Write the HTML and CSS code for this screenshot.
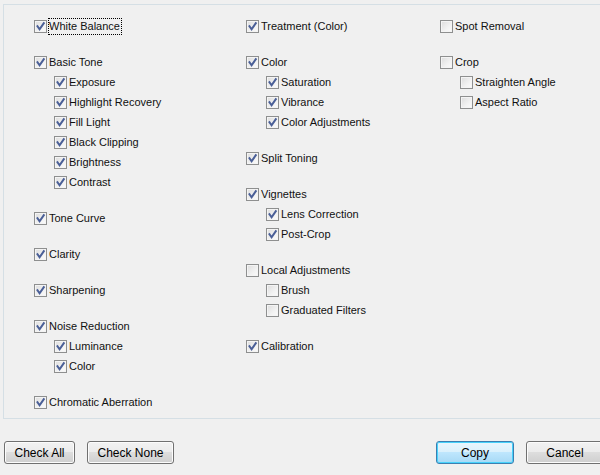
FILE: index.html
```html
<!DOCTYPE html>
<html>
<head>
<meta charset="utf-8">
<link rel="stylesheet" href="styles.css">
</head>
<body>
<div class="panel">
  <div class="col col1">
    <div class="group">
      <div class="row"><span class="cb on"><svg viewBox="0 0 11 11"><path d="M2.5 5.2 L4.6 8.3 L8.8 2.2" /></svg></span><span class="lbl focus">White Balance</span></div>
    </div>
    <div class="group">
      <div class="row"><span class="cb on"><svg viewBox="0 0 11 11"><path d="M2.5 5.2 L4.6 8.3 L8.8 2.2" /></svg></span><span class="lbl">Basic Tone</span></div>
      <div class="row sub"><span class="cb on"><svg viewBox="0 0 11 11"><path d="M2.5 5.2 L4.6 8.3 L8.8 2.2" /></svg></span><span class="lbl">Exposure</span></div>
      <div class="row sub"><span class="cb on"><svg viewBox="0 0 11 11"><path d="M2.5 5.2 L4.6 8.3 L8.8 2.2" /></svg></span><span class="lbl">Highlight Recovery</span></div>
      <div class="row sub"><span class="cb on"><svg viewBox="0 0 11 11"><path d="M2.5 5.2 L4.6 8.3 L8.8 2.2" /></svg></span><span class="lbl">Fill Light</span></div>
      <div class="row sub"><span class="cb on"><svg viewBox="0 0 11 11"><path d="M2.5 5.2 L4.6 8.3 L8.8 2.2" /></svg></span><span class="lbl">Black Clipping</span></div>
      <div class="row sub"><span class="cb on"><svg viewBox="0 0 11 11"><path d="M2.5 5.2 L4.6 8.3 L8.8 2.2" /></svg></span><span class="lbl">Brightness</span></div>
      <div class="row sub"><span class="cb on"><svg viewBox="0 0 11 11"><path d="M2.5 5.2 L4.6 8.3 L8.8 2.2" /></svg></span><span class="lbl">Contrast</span></div>
    </div>
    <div class="group">
      <div class="row"><span class="cb on"><svg viewBox="0 0 11 11"><path d="M2.5 5.2 L4.6 8.3 L8.8 2.2" /></svg></span><span class="lbl">Tone Curve</span></div>
    </div>
    <div class="group">
      <div class="row"><span class="cb on"><svg viewBox="0 0 11 11"><path d="M2.5 5.2 L4.6 8.3 L8.8 2.2" /></svg></span><span class="lbl">Clarity</span></div>
    </div>
    <div class="group">
      <div class="row"><span class="cb on"><svg viewBox="0 0 11 11"><path d="M2.5 5.2 L4.6 8.3 L8.8 2.2" /></svg></span><span class="lbl">Sharpening</span></div>
    </div>
    <div class="group">
      <div class="row"><span class="cb on"><svg viewBox="0 0 11 11"><path d="M2.5 5.2 L4.6 8.3 L8.8 2.2" /></svg></span><span class="lbl">Noise Reduction</span></div>
      <div class="row sub"><span class="cb on"><svg viewBox="0 0 11 11"><path d="M2.5 5.2 L4.6 8.3 L8.8 2.2" /></svg></span><span class="lbl">Luminance</span></div>
      <div class="row sub"><span class="cb on"><svg viewBox="0 0 11 11"><path d="M2.5 5.2 L4.6 8.3 L8.8 2.2" /></svg></span><span class="lbl">Color</span></div>
    </div>
    <div class="group">
      <div class="row"><span class="cb on"><svg viewBox="0 0 11 11"><path d="M2.5 5.2 L4.6 8.3 L8.8 2.2" /></svg></span><span class="lbl">Chromatic Aberration</span></div>
    </div>
  </div>

  <div class="col col2">
    <div class="group">
      <div class="row"><span class="cb on"><svg viewBox="0 0 11 11"><path d="M2.5 5.2 L4.6 8.3 L8.8 2.2" /></svg></span><span class="lbl">Treatment (Color)</span></div>
    </div>
    <div class="group">
      <div class="row"><span class="cb on"><svg viewBox="0 0 11 11"><path d="M2.5 5.2 L4.6 8.3 L8.8 2.2" /></svg></span><span class="lbl">Color</span></div>
      <div class="row sub"><span class="cb on"><svg viewBox="0 0 11 11"><path d="M2.5 5.2 L4.6 8.3 L8.8 2.2" /></svg></span><span class="lbl">Saturation</span></div>
      <div class="row sub"><span class="cb on"><svg viewBox="0 0 11 11"><path d="M2.5 5.2 L4.6 8.3 L8.8 2.2" /></svg></span><span class="lbl">Vibrance</span></div>
      <div class="row sub"><span class="cb on"><svg viewBox="0 0 11 11"><path d="M2.5 5.2 L4.6 8.3 L8.8 2.2" /></svg></span><span class="lbl">Color Adjustments</span></div>
    </div>
    <div class="group">
      <div class="row"><span class="cb on"><svg viewBox="0 0 11 11"><path d="M2.5 5.2 L4.6 8.3 L8.8 2.2" /></svg></span><span class="lbl">Split Toning</span></div>
    </div>
    <div class="group">
      <div class="row"><span class="cb on"><svg viewBox="0 0 11 11"><path d="M2.5 5.2 L4.6 8.3 L8.8 2.2" /></svg></span><span class="lbl">Vignettes</span></div>
      <div class="row sub"><span class="cb on"><svg viewBox="0 0 11 11"><path d="M2.5 5.2 L4.6 8.3 L8.8 2.2" /></svg></span><span class="lbl">Lens Correction</span></div>
      <div class="row sub"><span class="cb on"><svg viewBox="0 0 11 11"><path d="M2.5 5.2 L4.6 8.3 L8.8 2.2" /></svg></span><span class="lbl">Post-Crop</span></div>
    </div>
    <div class="group">
      <div class="row"><span class="cb"></span><span class="lbl">Local Adjustments</span></div>
      <div class="row sub"><span class="cb"></span><span class="lbl">Brush</span></div>
      <div class="row sub"><span class="cb"></span><span class="lbl">Graduated Filters</span></div>
    </div>
    <div class="group">
      <div class="row"><span class="cb on"><svg viewBox="0 0 11 11"><path d="M2.5 5.2 L4.6 8.3 L8.8 2.2" /></svg></span><span class="lbl">Calibration</span></div>
    </div>
  </div>

  <div class="col col3">
    <div class="group">
      <div class="row"><span class="cb"></span><span class="lbl">Spot Removal</span></div>
    </div>
    <div class="group">
      <div class="row"><span class="cb"></span><span class="lbl">Crop</span></div>
      <div class="row sub"><span class="cb"></span><span class="lbl">Straighten Angle</span></div>
      <div class="row sub"><span class="cb"></span><span class="lbl">Aspect Ratio</span></div>
    </div>
  </div>
</div>

<div class="footer">
  <div class="btns">
    <button class="btn w71">Check All</button>
    <button class="btn w87">Check None</button>
  </div>
  <div class="btns">
    <button class="btn w78 default">Copy</button>
    <button class="btn w78">Cancel</button>
  </div>
</div>
</body>
</html>
```

FILE: styles.css
```css
html, body {
  margin: 0;
  padding: 0;
  background: #f0f0f0;
  overflow: hidden;
}
body {
  width: 600px;
  height: 475px;
  font-family: "Liberation Sans", Arial, sans-serif;
  font-size: 11px;
  color: #000;
}
.panel {
  margin: 4px 0 0 3px;
  width: 620px;
  height: 415px;
  border: 1px solid #d5dfe5;
  border-right: none;
  box-sizing: border-box;
  display: grid;
  grid-template-columns: 212px 194px 1fr;
  padding: 11px 0 0 30px;
  align-items: start;
}
.group {
  margin-bottom: 16px;
}
.row {
  height: 20px;
  display: flex;
  align-items: center;
}
.row.sub {
  padding-left: 20px;
}
.cb {
  width: 13px;
  height: 13px;
  box-sizing: border-box;
  border: 1px solid #8e8f8f;
  background: linear-gradient(135deg, #dcdcdc 0%, #f2f2f2 60%, #fbfbfb 100%);
  box-shadow: inset 0 0 0 1px #f4f4f4;
  flex: none;
  display: flex;
  align-items: center;
  justify-content: center;
}
.cb svg {
  width: 11px;
  height: 11px;
  display: block;
}
.cb svg path {
  fill: none;
  stroke: #4a5f97;
  stroke-width: 2;
  stroke-linecap: square;
  stroke-linejoin: miter;
}
.lbl {
  margin-left: 1px;
  padding: 1px 1px 1px 0;
  line-height: 13px;
  border: 1px solid transparent;
  white-space: nowrap;
  color: #111;
}
.lbl.focus {
  border: 1px dotted #000;
}
.footer {
  margin-top: 22px;
  width: 604px;
  display: flex;
  justify-content: space-between;
  padding-left: 4px;
  box-sizing: border-box;
}
.btns {
  display: flex;
  gap: 12px;
}
.btn {
  height: 23px;
  box-sizing: border-box;
  border: 1px solid #707070;
  border-radius: 3px;
  background: linear-gradient(#f2f2f2 0%, #ebebeb 50%, #dddddd 50%, #cfcfcf 100%);
  box-shadow: inset 0 0 0 1px #fcfcfc;
  font-family: "Liberation Sans", Arial, sans-serif;
  font-size: 12px;
  color: #000;
  padding: 0;
  margin: 0;
}
.btn.default {
  border-color: #3c7fb1;
  background: linear-gradient(#eaf6fd 0%, #d9f0fc 50%, #bee6fd 50%, #a7d9f5 100%);
  box-shadow: inset 0 0 0 1px #48d2fb;
}
.w71 { width: 71px; }
.w87 { width: 87px; }
.w78 { width: 78px; }
```
